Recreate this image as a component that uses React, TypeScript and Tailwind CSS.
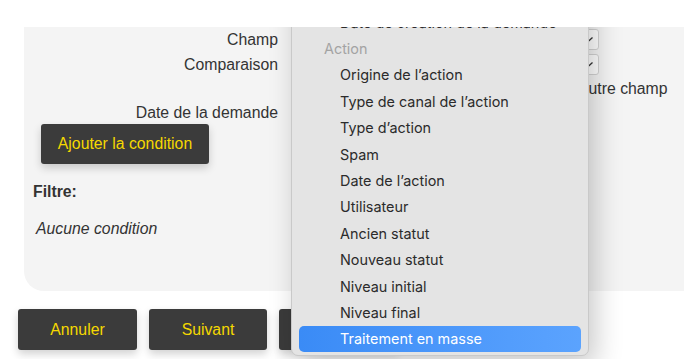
import React from "react";

const menuItems = [
  "Origine de l’action",
  "Type de canal de l’action",
  "Type d’action",
  "Spam",
  "Date de l’action",
  "Utilisateur",
  "Ancien statut",
  "Nouveau statut",
  "Niveau initial",
  "Niveau final",
];

function DarkButton({ label, className = "" }: { label: string; className?: string }) {
  return (
    <button
      type="button"
      className={
        "flex items-center justify-center rounded-[3px] bg-[#3b3b3b] text-[15.8px] text-[#f5d800] shadow-[0_4px_8px_rgba(0,0,0,0.18)] " +
        className
      }
    >
      {label}
    </button>
  );
}

function SelectStub() {
  return (
    <div className="flex h-[21px] w-[306px] items-center justify-end rounded-[3px] border border-[#d4d4d4] bg-white pr-[4px]">
      <svg width="8" height="8" viewBox="0 0 8 8" className="text-[#333]">
        <path d="M1 6.5 L6.5 1.5" stroke="currentColor" strokeWidth="1.3" fill="none" />
      </svg>
    </div>
  );
}

function SelectMenu() {
  return (
    <div className="absolute bottom-[3px] left-[291px] w-[298px] rounded-[7px] border border-[#c9c9c9] bg-[#e4e4e4] px-[7px] pb-[3px] font-['Inter',sans-serif] text-[14.4px] text-[#2b2b2b] shadow-[6px_10px_28px_rgba(0,0,0,0.22)]">
      <div className="flex h-[26.4px] items-center pl-[41px]">Demandeur</div>
      <div className="flex h-[26.4px] items-center pl-[41px]">Date de création de la demande</div>
      <div className="flex h-[26.4px] items-center pl-[25px] text-[#a3a3a3]">Action</div>
      {menuItems.map((item) => (
        <div key={item} className="flex h-[26.4px] items-center pl-[41px]">
          {item}
        </div>
      ))}
      <div className="flex h-[26px] items-center rounded-[5px] bg-gradient-to-r from-[#3a8bf6] to-[#5ba3fe] pl-[41px] text-white">
        Traitement en masse
      </div>
    </div>
  );
}

export default function App() {
  return (
    <div className="h-[359px] w-[684px] overflow-hidden bg-white font-['Liberation_Sans',Arial,sans-serif] text-[#333]">
      <div className="h-[27px] bg-white" />
      <div className="relative h-[332px] overflow-hidden">
        <div className="ml-[24px] flex h-[264px] flex-col rounded-bl-[20px] bg-[#f4f4f4] text-[15.8px]">
          <div className="flex h-[25px] items-center">
            <div className="w-[254px] text-right">Champ</div>
            <div className="ml-[15px]">
              <SelectStub />
            </div>
          </div>
          <div className="flex h-[25px] items-center">
            <div className="w-[254px] text-right">Comparaison</div>
            <div className="ml-[15px]">
              <SelectStub />
            </div>
          </div>
          <div className="flex h-[24px] items-center">
            <div className="ml-[427px] flex items-center gap-[6px] whitespace-nowrap">
              <span className="h-[13px] w-[13px] rounded-[3px] border border-[#9a9a9a] bg-white" />
              <span>Comparer à un autre champ</span>
            </div>
          </div>
          <div className="flex h-[23px] items-center">
            <div className="w-[254px] text-right">Date de la demande</div>
          </div>
          <DarkButton label="Ajouter la condition" className="ml-[17px] h-[40px] w-[168px]" />
          <div className="ml-[9px] mt-[18px] font-bold leading-[20px]">Filtre:</div>
          <div className="ml-[12px] mt-[17px] italic leading-[20px]">Aucune condition</div>
        </div>
        <div className="ml-[18px] mt-[18px] flex gap-[12px]">
          <DarkButton label="Annuler" className="h-[41px] w-[119px]" />
          <DarkButton label="Suivant" className="h-[41px] w-[118px]" />
          <DarkButton label="Terminer" className="h-[41px] w-[119px]" />
        </div>
        <SelectMenu />
      </div>
    </div>
  );
}
